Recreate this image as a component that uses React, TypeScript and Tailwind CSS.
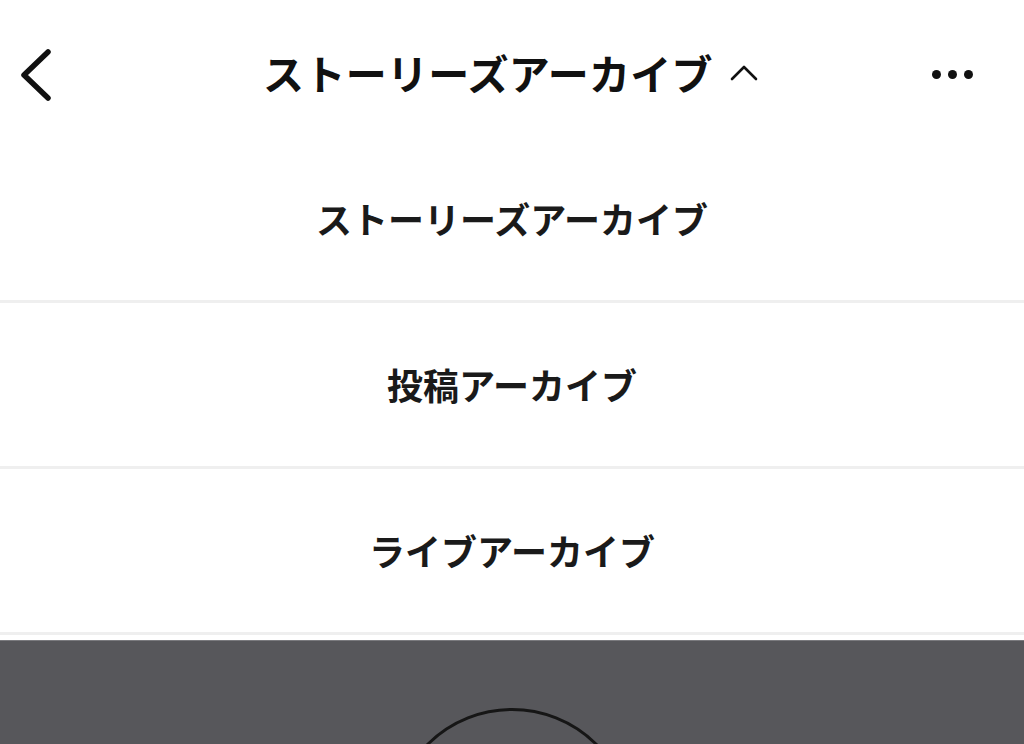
import React from "react";

const font = { fontFamily: '"Noto Sans CJK JP", "Noto Sans", sans-serif' };

function Item({ label }: { label: string }) {
  return (
    <div className="flex h-[166px] items-center justify-center border-b-[3px] border-[#efefef] pb-[2px]">
      <span className="text-[36px] font-bold leading-none text-[#1a1a1a]">{label}</span>
    </div>
  );
}

export default function App() {
  return (
    <div className="flex h-[744px] w-[1024px] flex-col overflow-hidden bg-white" style={font}>
      <div className="relative flex h-[137px] items-start justify-between px-[18px] pt-[46px]">
        <svg width="36" height="56" viewBox="0 0 36 56" className="mt-[1px]">
          <path d="M30 5 L6 28 L30 51" fill="none" stroke="#111" strokeWidth="5.5" strokeLinecap="round" strokeLinejoin="round" />
        </svg>
        <div className="absolute left-0 right-0 top-[52px] flex items-center justify-center gap-[16px]">
          <span className="text-[41px] font-bold leading-none tracking-[0.3px] text-[#111]">ストーリーズアーカイブ</span>
          <svg width="32" height="20" viewBox="0 0 32 20" className="mt-[2px]">
            <path d="M3 15 L15 3 L27 15" fill="none" stroke="#111" strokeWidth="2.6" strokeLinecap="round" strokeLinejoin="round" />
          </svg>
        </div>
        <div className="mr-[33px] mt-[24px] flex gap-[7px]">
          <div className="h-[9px] w-[9px] rounded-full bg-[#111]" />
          <div className="h-[9px] w-[9px] rounded-full bg-[#111]" />
          <div className="h-[9px] w-[9px] rounded-full bg-[#111]" />
        </div>
      </div>
      <Item label="ストーリーズアーカイブ" />
      <Item label="投稿アーカイブ" />
      <Item label="ライブアーカイブ" />
      <div className="h-[5px] bg-white" />
      <div className="relative flex flex-1 justify-center overflow-hidden border-t border-[#7a7a7e] bg-[#57575b]">
        <div className="mt-[67px] h-[242px] w-[242px] shrink-0 rounded-full border-[3px] border-[#161616]" />
      </div>
    </div>
  );
}
